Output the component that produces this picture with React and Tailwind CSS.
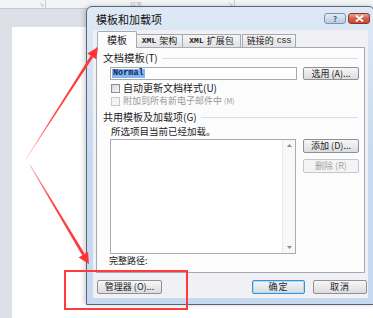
import React from "react";

const cjk = "[font-family:'Noto_Sans_CJK_SC','Liberation_Sans',sans-serif]";

function Btn({ children, className = "", disabled = false, focus = false }) {
  return (
    <div
      className={
        "flex items-center justify-center rounded-[2px] border text-[9px] leading-[12px] " +
        (disabled
          ? "border-[#c4c8cc] bg-[#f4f4f4] text-[#a3a3a3] "
          : focus
          ? "border-[#3c93d0] bg-gradient-to-b from-[#f3f6f9] to-[#d9dde2] text-[#1b1b1b] shadow-[inset_0_0_0_1px_#a9dcf6] "
          : "border-[#8d9196] bg-gradient-to-b from-[#f7f7f7] to-[#dcdcdc] text-[#1b1b1b] ") +
        className
      }
    >
      {children}
    </div>
  );
}

function Check({ label, disabled }) {
  return (
    <div className="flex h-[12px] items-center pl-[8px]">
      <div
        className={
          "h-[9px] w-[9px] border " +
          (disabled
            ? "border-[#c9c9c9] bg-[#f3f3f3]"
            : "border-[#8e8e8e] bg-gradient-to-br from-[#d6d6d6] to-[#f8f8f8]")
        }
      />
      <span
        className={
          "ml-[3px] leading-[12px] " +
          (disabled ? "text-[9px] text-[#9a9a9a]" : "text-[10px] text-[#1b1b1b]")
        }
      >
        {label}
      </span>
    </div>
  );
}

function GroupLabel({ children }) {
  return (
    <div className="flex h-[12px] items-center">
      <span className="whitespace-nowrap text-[10px] leading-[12px] text-[#1b1b1b]">{children}</span>
      <div className="ml-[4px] mr-[6px] h-px flex-1 bg-[#d8e1e8]" />
    </div>
  );
}

const mono = "[font-family:'Liberation_Mono',monospace]";

export default function App() {
  return (
    <div className={"relative h-[318px] w-[373px] overflow-hidden bg-[#dde1e7] " + cjk}>
      {/* Word ribbon strip */}
      <div className="relative flex h-[9px] items-start border-b border-[#c5cad2] bg-[#f3f4f6]">
        <div className="ml-[39px] mt-[1px] text-[5px] leading-[5px] text-[#8a8f96]">↘</div>
        <div className="ml-[1px] h-full w-px bg-[#c9ced5]" />
        <div className="ml-[84px] mt-[1px] text-[6px] leading-[7px] text-[#b7bcc3]">段落</div>
        <div className="ml-[86px] mt-[1px] text-[5px] leading-[5px] text-[#8a8f96]">↘</div>
        <div className="ml-[1px] h-full w-px bg-[#c9ced5]" />
      </div>
      {/* document page */}
      <div className="flex h-[309px] pl-[12px] pt-[18px]">
        <div className="h-full flex-1 bg-white" />
      </div>

      {/* dialog window */}
      <div className="absolute left-[86px] top-[6px] flex h-[299px] w-[289px] flex-col rounded-t-[6px] border border-[#56657a] bg-gradient-to-b from-[#dfe9f5] via-[#c8daef] to-[#c6d9ef] shadow-[-2px_0_5px_rgba(0,0,0,0.18)]">
        {/* title bar */}
        <div className="flex h-[23px] items-start">
          <div className="ml-[9px] mt-[6px] text-[11px] leading-[13px] text-[#111]">模板和加载项</div>
          <div className="ml-auto mr-[4px] mt-[6px] flex gap-[2px]">
            <div className="flex h-[11px] w-[22px] items-center justify-center rounded-[3px] border border-[#7a92b3] bg-gradient-to-b from-[#e4edf7] to-[#b7cbe3] text-[8px] font-bold leading-[8px] text-[#4d6385]">
              ?
            </div>
            <div className="flex h-[11px] w-[22px] items-center justify-center rounded-[3px] border border-[#83392d] bg-gradient-to-b from-[#eba497] via-[#d4604b] to-[#c7452f]">
              <svg width="9" height="7" viewBox="0 0 9 7">
                <path d="M1.5 1 L7.5 6 M7.5 1 L1.5 6" stroke="#fff" strokeWidth="1.8" strokeLinecap="round" />
              </svg>
            </div>
          </div>
        </div>

        {/* body */}
        <div className="mx-[6px] flex h-[268px] flex-col bg-[#f1f0f4] pl-[3px]">
          {/* tabs */}
          <div className="relative z-10 flex h-[18px] items-end pl-[1px] text-[#1b1b1b]">
            <div className="flex h-[17px] w-[40px] items-center justify-center rounded-t-[2px] border border-b-0 border-[#a3aab3] bg-[#fcfcfc] text-[10px] leading-[12px]">
              模板
            </div>
            <div className="-ml-px flex h-[14px] w-[47px] items-center justify-center border border-[#a3aab3] bg-gradient-to-b from-[#f5f5f5] to-[#e2e2e2] text-[9px] leading-[12px]">
              <span className={mono + " text-[8px] font-bold"}>XML</span>
              <span className="ml-[3px]">架构</span>
            </div>
            <div className="-ml-px flex h-[14px] w-[59px] items-center justify-center border border-[#a3aab3] bg-gradient-to-b from-[#f5f5f5] to-[#e2e2e2] text-[9px] leading-[12px]">
              <span className={mono + " text-[8px] font-bold"}>XML</span>
              <span className="ml-[3px]">扩展包</span>
            </div>
            <div className="ml-px flex h-[14px] w-[54px] items-center justify-center border border-[#a3aab3] bg-gradient-to-b from-[#f5f5f5] to-[#e2e2e2] text-[9px] leading-[12px]">
              <span>链接的</span>
              <span className={mono + " ml-[3px] text-[8px]"}>CSS</span>
            </div>
          </div>

          {/* tab panel */}
          <div className="-mt-px flex h-[226px] w-[269px] flex-col border border-[#a3aab3] bg-[#fcfcfd] pl-[6px]">
            <div className="mt-[4px]">
              <GroupLabel>
                <span className="text-[10.5px]">文档模板</span>(T)
              </GroupLabel>
            </div>
            <div className="mt-[3px] flex pl-[7px]">
              <div className="flex h-[13px] w-[187px] items-center border border-[#a6a9af] bg-white pl-[1px]">
                <span className={mono + " bg-[#86b6ee] px-px text-[8.5px] font-bold leading-[9px] text-[#0e2463]"}>Normal</span>
              </div>
              <Btn className="ml-[6px] h-[13px] w-[56px]">选用 (A)...</Btn>
            </div>
            <div className="mt-[2px]">
              <Check label="自动更新文档样式(U)" />
            </div>
            <div className="mt-[1px]">
              <Check label={<>附加到所有新电子邮件中 <span className="text-[7px]">(M)</span></>} disabled />
            </div>
            <div className="mt-[4px]">
              <GroupLabel>共用模板及加载项(G)</GroupLabel>
            </div>
            <div className="mt-[2px] h-[12px] pl-[8px] text-[9.5px] leading-[12px] text-[#1b1b1b]">所选项目当前已经加载。</div>
            <div className="mt-[2px] flex pl-[7px]">
              <div className="flex h-[115px] w-[186px] justify-end border border-[#a9acb2] bg-white">
                <div className="flex w-[13px] flex-col items-center justify-between border-l border-[#e8e8ea] bg-[#f8f8f9] py-[4px]">
                  <svg width="5" height="3" viewBox="0 0 5 3">
                    <path d="M0 3 L2.5 0 L5 3 Z" fill="#8c8c8c" />
                  </svg>
                  <svg width="5" height="3" viewBox="0 0 5 3">
                    <path d="M0 0 L2.5 3 L5 0 Z" fill="#8c8c8c" />
                  </svg>
                </div>
              </div>
              <div className="ml-[7px] flex flex-col">
                <Btn className="h-[14px] w-[56px]">添加 (D)...</Btn>
                <Btn className="mt-[6px] h-[14px] w-[56px]" disabled>
                  删除 (R)
                </Btn>
              </div>
            </div>
            <div className="mt-[1px] h-[12px] pl-[6px] text-[9px] leading-[12px] text-[#1b1b1b]">完整路径:</div>
          </div>

          {/* bottom buttons */}
          <div className="mt-[7px] flex">
            <Btn className="ml-[1px] h-[14px] w-[65px]">管理器 (O)...</Btn>
            <Btn className="ml-auto h-[14px] w-[53px] tracking-[1px]" focus>
              确定
            </Btn>
            <Btn className="ml-[8px] mr-[1px] h-[14px] w-[54px] tracking-[1px]">取消</Btn>
          </div>
        </div>
      </div>

      {/* annotations */}
      <svg className="pointer-events-none absolute left-0 top-0" width="373" height="318" viewBox="0 0 373 318">
        <defs>
          <linearGradient id="a1" x1="26" y1="159" x2="98" y2="47" gradientUnits="userSpaceOnUse">
            <stop offset="0" stopColor="#ff3b3b" stopOpacity="0.35" />
            <stop offset="0.35" stopColor="#ff3b3b" stopOpacity="0.95" />
            <stop offset="1" stopColor="#ff3333" />
          </linearGradient>
          <linearGradient id="a2" x1="30" y1="165" x2="89" y2="264" gradientUnits="userSpaceOnUse">
            <stop offset="0" stopColor="#ff3b3b" stopOpacity="0.35" />
            <stop offset="0.35" stopColor="#ff3b3b" stopOpacity="0.95" />
            <stop offset="1" stopColor="#ff3333" />
          </linearGradient>
        </defs>
        {/* arrow 1 */}
        <polygon points="25.6,159.3 26.4,158.7 93.3,57.1 90.8,55.4" fill="url(#a1)" />
        <polygon points="98,47 96.3,59.3 87.3,53.5" fill="#ff3333" />
        {/* arrow 2 */}
        <polygon points="29.6,165.3 30.4,164.7 84.7,253.8 82.1,255.3" fill="url(#a2)" />
        <polygon points="89,264 78.6,257.4 88.0,251.8" fill="#ff3333" />
        {/* red box */}
        <rect x="65" y="271" width="122" height="38" fill="none" stroke="#ff3a3a" strokeWidth="2" />
      </svg>
    </div>
  );
}
